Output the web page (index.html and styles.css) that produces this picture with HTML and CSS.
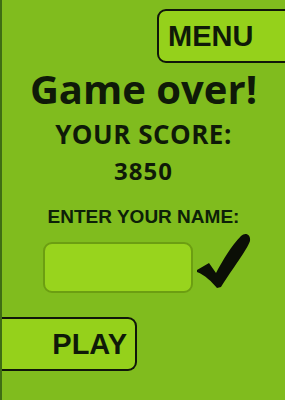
FILE: index.html
```html
<!DOCTYPE html>
<html lang="en">
  <head>
    <meta charset="UTF-8" />
    <meta name="viewport" content="width=device-width, initial-scale=1.0" />
    <title>Game Over</title>
    <link rel="stylesheet" href="styles.css">
  </head>

  <body>
    <div class="screen">
      <div class="top-bar">
        <button class="menu-btn">MENU</button>
      </div>

      <h1 class="title">Game over!</h1>
      <h2 class="score-label">YOUR SCORE:</h2>
      <p class="score">3850</p>

      <p class="name-label">ENTER YOUR NAME:</p>
      <div class="name-row">
        <input class="name-input" type="text" />
        <svg class="check" width="54" height="57" viewBox="0 0 54 57">
          <path d="M0 38 L12 31 L19 41 C26 28 34 14 44 4 C48 0 54 2 53 9 C50 18 36 36 24 55 L20 56 C15 50 8 43 0 40 Z" fill="#0b0f06" />
        </svg>
      </div>

      <button class="play-btn">PLAY</button>
    </div>
  </body>
</html>
```

FILE: styles.css
```css
* {
  box-sizing: border-box;
  margin: 0;
  padding: 0;
}

body {
  font-family: "Open Sans", sans-serif;
  background-color: #80bc1e;
  color: #0f1a08;
}

.screen {
  width: 285px;
  height: 400px;
  overflow: hidden;
  background-color: #80bc1e;
  border-left: 2px solid #3f6d14;
  padding-top: 9px;
}

.top-bar {
  display: flex;
  justify-content: flex-end;
}

.menu-btn,
.play-btn {
  display: flex;
  align-items: center;
  height: 54px;
  background-color: #95d11b;
  border: 2px solid #10160a;
  font-family: "Liberation Sans", Arial, sans-serif;
  font-weight: bold;
  font-size: 29px;
  color: #0f1a08;
  cursor: pointer;
}

.menu-btn {
  width: 142px;
  margin-right: -14px;
  border-radius: 9px;
  padding-left: 9px;
}

.title {
  margin-top: 6px;
  text-align: center;
  font-size: 40px;
  line-height: 40px;
  font-weight: bold;
}

.score-label {
  margin-top: 12px;
  text-align: center;
  font-size: 26px;
  line-height: 26px;
  font-weight: bold;
  letter-spacing: 0.5px;
}

.score {
  margin-top: 12px;
  text-align: center;
  font-size: 24px;
  line-height: 24px;
  font-weight: bold;
  letter-spacing: 1px;
}

.name-label {
  margin-top: 24px;
  text-align: center;
  font-family: "Liberation Sans", Arial, sans-serif;
  font-size: 19px;
  line-height: 19px;
  font-weight: bold;
  color: #0d2008;
}

.name-row {
  display: flex;
  align-items: flex-start;
  margin-top: 6px;
}

.name-input {
  width: 150px;
  height: 51px;
  margin-top: 10px;
  margin-left: 41px;
  background-color: #98d41d;
  border: 2px solid #6c9e12;
  border-radius: 9px;
  outline: none;
}

.check {
  margin-left: 4px;
}

.play-btn {
  justify-content: flex-end;
  width: 135px;
  margin-top: 24px;
  padding-right: 8px;
  border-left: none;
  border-radius: 0 9px 9px 0;
}
```
